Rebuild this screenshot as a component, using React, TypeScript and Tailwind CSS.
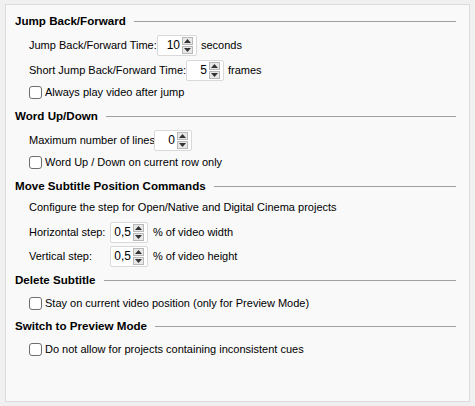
import React from 'react'

const font = { fontFamily: '"Liberation Sans", Arial, sans-serif' }

function Heading({ title, mt }: { title: string; mt: string }) {
  return (
    <div className={`flex items-center h-[20px] pl-[9px] pr-[13px] ${mt}`}>
      <span className="font-bold text-[11.6px] text-black whitespace-nowrap">{title}</span>
      <div className="flex-1 h-px bg-[#a0a0a0] ml-[8px]" />
    </div>
  )
}

function Spin({ value, width }: { value: string; width: string }) {
  return (
    <div className={`flex shrink-0 items-center h-[21px] bg-white border border-[#d9d9d9] rounded-[2px] pr-[3px] ${width}`}>
      <span className="flex-1 text-right pr-[2px] text-[12px] text-black">{value}</span>
      <div className="flex flex-col gap-px">
        <div className="w-[11px] h-[8px] bg-[#e8e8e8] border border-[#b8b8b8] flex items-center justify-center">
          <svg width="7" height="4" viewBox="0 0 7 4"><path d="M3.5 0L7 4H0z" fill="#333" /></svg>
        </div>
        <div className="w-[11px] h-[8px] bg-[#e8e8e8] border border-[#b8b8b8] flex items-center justify-center">
          <svg width="7" height="4" viewBox="0 0 7 4"><path d="M0 0H7L3.5 4z" fill="#333" /></svg>
        </div>
      </div>
    </div>
  )
}

function Check({ label, mt }: { label: string; mt: string }) {
  return (
    <div className={`flex items-center h-[20px] pl-[23px] gap-[3px] ${mt}`}>
      <div className="w-[13px] h-[13px] shrink-0 rounded-[3px] border border-[#6e6e6e] bg-white" />
      <span className="text-[11px] text-black whitespace-nowrap">{label}</span>
    </div>
  )
}

function Row({ children, mt }: { children: React.ReactNode; mt: string }) {
  return (
    <div className={`flex items-center h-[24px] pl-[23px] text-[11px] text-black whitespace-nowrap ${mt}`}>
      {children}
    </div>
  )
}

export default function App() {
  return (
    <div className="w-[475px] h-[406px] bg-[#f0f0f0] pl-[5px] pt-[4px]" style={font}>
      <div className="w-[465px] h-[398px] bg-[#f9f9f9] border border-[#dcdcdc] pt-[6px]">
        <Heading title="Jump Back/Forward" mt="mt-0" />
        <Row mt="mt-[2px]">
          <span className="w-[128px] shrink-0">Jump Back/Forward Time:</span>
          <Spin value="10" width="w-[40px]" />
          <span className="ml-[4px]">seconds</span>
        </Row>
        <Row mt="mt-[1px]">
          <span className="w-[157px] shrink-0">Short Jump Back/Forward Time:</span>
          <Spin value="5" width="w-[38px]" />
          <span className="ml-[4px]">frames</span>
        </Row>
        <Check label="Always play video after jump" mt="mt-0" />
        <Heading title="Word Up/Down" mt="mt-[4px]" />
        <Row mt="mt-[2px]">
          <span className="w-[125px] shrink-0">Maximum number of lines</span>
          <Spin value="0" width="w-[38px]" />
        </Row>
        <Check label="Word Up / Down on current row only" mt="mt-0" />
        <Heading title="Move Subtitle Position Commands" mt="mt-[4px]" />
        <div className="flex items-center h-[20px] mt-[1px] pl-[23px] text-[11px] text-black whitespace-nowrap">
          Configure the step for Open/Native and Digital Cinema projects
        </div>
        <Row mt="mt-[3px]">
          <span className="w-[81px] shrink-0">Horizontal step:</span>
          <Spin value="0,5" width="w-[38px]" />
          <span className="ml-[5px]">% of video width</span>
        </Row>
        <Row mt="mt-0">
          <span className="w-[81px] shrink-0">Vertical step:</span>
          <Spin value="0,5" width="w-[38px]" />
          <span className="ml-[5px]">% of video height</span>
        </Row>
        <Heading title="Delete Subtitle" mt="mt-[2px]" />
        <Check label="Stay on current video position (only for Preview Mode)" mt="mt-[3px]" />
        <Heading title="Switch to Preview Mode" mt="mt-[3px]" />
        <Check label="Do not allow for projects containing inconsistent cues" mt="mt-[3px]" />
      </div>
    </div>
  )
}
